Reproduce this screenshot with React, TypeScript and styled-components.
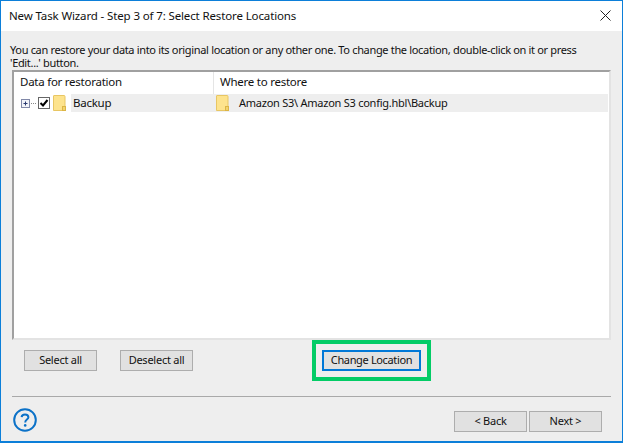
import React from "react";
import styled, { createGlobalStyle } from "styled-components";

const Global = createGlobalStyle`
  html, body { margin: 0; padding: 0; background: #eeeeee; }
  * { box-sizing: border-box; }
`;

const Window = styled.div`
  width: 623px;
  height: 443px;
  border: 1px solid #0c7fd9;
  border-bottom-width: 2px;
  background: #eeeeee;
  font-family: "Noto Sans", "Open Sans", sans-serif;
  font-size: 11px;
  letter-spacing: -0.25px;
  color: #111;
  display: flex;
  flex-direction: column;
  overflow: hidden;
`;

const TitleBar = styled.div`
  height: 30px;
  flex: none;
  background: #fff;
  display: flex;
  align-items: center;
  justify-content: space-between;
  padding: 0 11px 2px 8px;
  font-size: 11.5px;
  letter-spacing: -0.13px;
`;

const CloseIcon = styled.svg`
  width: 11px;
  height: 11px;
  display: block;
`;

const Intro = styled.p`
  margin: 12px 0 0;
  padding: 0 9px;
  height: 27px;
  line-height: 13px;
  white-space: nowrap;
  letter-spacing: -0.33px;
`;

const List = styled.div`
  margin: 0 11px;
  height: 270px;
  flex: none;
  background: #fff;
  border: 2px solid #e3e3e3;
  border-top-color: #a0a0a0;
  border-left-color: #a0a0a0;
`;

const Grid = styled.div`
  display: grid;
  grid-template-columns: 200px 1fr;
`;

const HeadCell = styled.div<{ $divider?: boolean }>`
  height: 22px;
  line-height: 20px;
  padding-left: 6px;
  font-size: 11.5px;
  border-right: ${(p) => (p.$divider ? "1px solid #e5e5e5" : "none")};
`;

const Row = styled.div`
  grid-column: 1 / 3;
  display: grid;
  grid-template-columns: 200px 1fr;
  height: 18px;
  margin-right: 1px;
`;

const TreeCell = styled.div`
  display: flex;
  align-items: center;
  padding-left: 7px;
  font-size: 11.5px;
`;

const Expander = styled.svg`
  width: 16px;
  height: 9px;
  flex: none;
`;

const CheckBox = styled.svg`
  width: 12px;
  height: 12px;
  flex: none;
  margin-left: 1px;
`;

const Folder = styled.svg`
  width: 13px;
  height: 16px;
  flex: none;
`;

const TreeFolder = styled(Folder)`
  margin-left: 3px;
`;

const Label = styled.span`
  background: #eeeeee;
  height: 18px;
  line-height: 17px;
  flex: 1;
  margin-left: 5px;
  padding-left: 2px;
`;

const TargetCell = styled.div`
  display: flex;
  align-items: center;
  background: #eeeeee;
  padding-left: 2px;
`;

const TargetText = styled.span`
  margin-left: 10px;
  line-height: 17px;
  height: 18px;
`;

const Actions = styled.div`
  height: 41px;
  flex: none;
  padding-left: 23px;
  display: flex;
  align-items: center;
`;

const Button = styled.button`
  width: 73px;
  height: 21px;
  padding: 0 0 2px;
  background: #e1e1e1;
  border: 1px solid #adadad;
  font: inherit;
  letter-spacing: inherit;
  color: #111;
`;

const SecondButton = styled(Button)`
  margin-left: 23px;
`;

const Highlight = styled.div`
  margin-left: 119px;
  width: 119px;
  height: 41px;
  border: 4px solid #03cc66;
  padding: 6px;
  display: flex;
`;

const FocusButton = styled(Button)`
  width: 99px;
  border: 2px solid #0078d7;
  letter-spacing: -0.35px;
`;

const Separator = styled.div`
  margin: 15px 11px 0;
  height: 1px;
  flex: none;
  background: #a9a9a9;
`;

const Footer = styled.div`
  flex: 1;
  display: flex;
  justify-content: space-between;
  align-items: flex-start;
  padding: 11px 20px 0 12px;
`;

const HelpIcon = styled.svg`
  width: 24px;
  height: 24px;
  display: block;
`;

const Nav = styled.div`
  display: flex;
  gap: 2px;
  padding-top: 3px;
`;

const FolderArt = () => (
  <>
    <path d="M.5 15.5 V1 a.5.5 0 0 1 .5-.5 h10 a1 1 0 0 1 1 1 V15.5 Z" fill="#fde38d" stroke="#e8c663" />
    <rect x="9.5" y="11.5" width="3" height="4" fill="#f3d36d" stroke="#dcb545" />
  </>
);

export default function App() {
  return (
    <>
      <Global />
      <Window>
        <TitleBar>
          <span>New Task Wizard - Step 3 of 7: Select Restore Locations</span>
          <CloseIcon viewBox="0 0 11 11">
            <path d="M.5.5 L10.5 10.5 M10.5.5 L.5 10.5" stroke="#222" strokeWidth="1" fill="none" />
          </CloseIcon>
        </TitleBar>
        <Intro>
          You can restore your data into its original location or any other one. To change the location, double-click on it or press
          <br />
          'Edit...' button.
        </Intro>
        <List>
          <Grid>
            <HeadCell $divider>Data for restoration</HeadCell>
            <HeadCell>Where to restore</HeadCell>
            <Row>
              <TreeCell>
                <Expander viewBox="0 0 16 9">
                  <rect x=".5" y=".5" width="8" height="8" fill="#f2f4fa" stroke="#8088a8" />
                  <path d="M2.5 4.5 H6.5 M4.5 2.5 V6.5" stroke="#2b3a70" />
                  <path d="M10 4.5 H16" stroke="#888" strokeDasharray="1 1" />
                </Expander>
                <CheckBox viewBox="0 0 12 12">
                  <rect x=".5" y=".5" width="11" height="11" fill="#fff" stroke="#666" />
                  <path d="M2.5 6 L5 8.5 L9.5 3" stroke="#000" strokeWidth="2" fill="none" />
                </CheckBox>
                <TreeFolder viewBox="0 0 13 16"><FolderArt /></TreeFolder>
                <Label>Backup</Label>
              </TreeCell>
              <TargetCell>
                <Folder viewBox="0 0 13 16"><FolderArt /></Folder>
                <TargetText>Amazon S3\ Amazon S3 config.hbl\Backup</TargetText>
              </TargetCell>
            </Row>
          </Grid>
        </List>
        <Actions>
          <Button>Select all</Button>
          <SecondButton>Deselect all</SecondButton>
          <Highlight>
            <FocusButton>Change Location</FocusButton>
          </Highlight>
        </Actions>
        <Separator />
        <Footer>
          <HelpIcon viewBox="0 0 24 24">
            <circle cx="12" cy="12" r="10.8" fill="none" stroke="#0c72c8" strokeWidth="2" />
            <path d="M8.6 9.2 C8.8 7 10.4 6.4 12 6.4 C14 6.4 15.4 7.6 15.4 9.2 C15.4 11.6 12.2 11.6 12.2 14.4" fill="none" stroke="#0c72c8" strokeWidth="2" />
            <circle cx="12.2" cy="17.4" r="1.3" fill="#0c72c8" />
          </HelpIcon>
          <Nav>
            <Button>&lt; Back</Button>
            <Button>Next &gt;</Button>
          </Nav>
        </Footer>
      </Window>
    </>
  );
}
